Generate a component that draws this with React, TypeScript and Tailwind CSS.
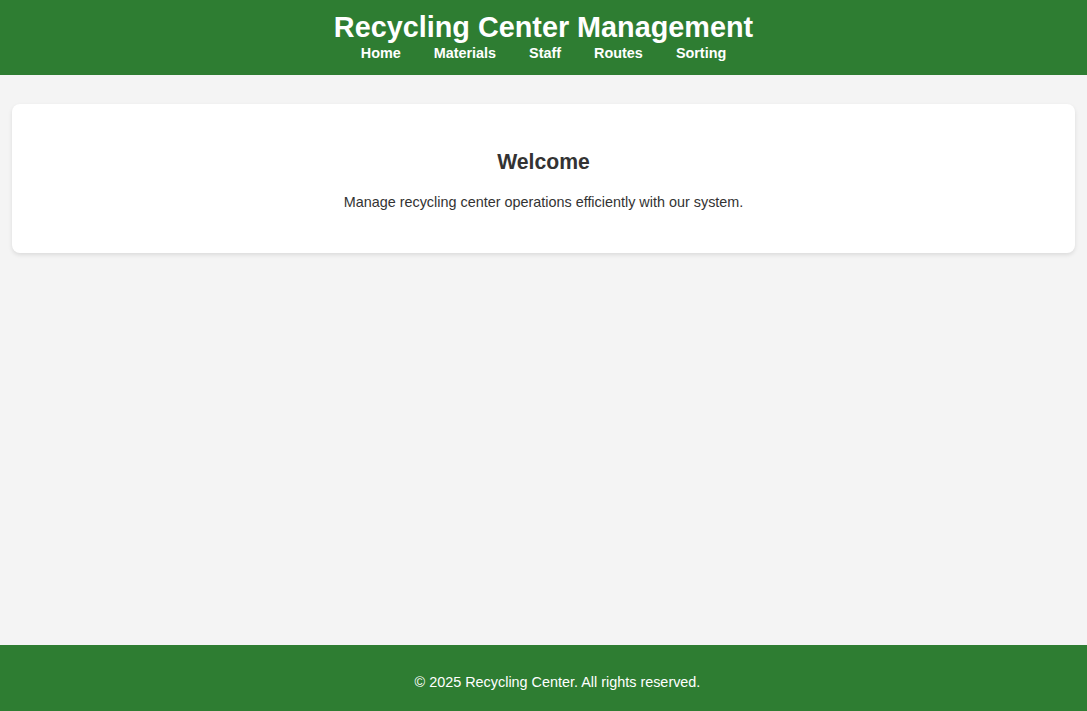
const navLinks = ["Home", "Materials", "Staff", "Routes", "Sorting"];

const App = () => {
    return (
        <div className="min-h-screen flex flex-col bg-[#f4f4f4] text-[#333] font-['Liberation_Sans',Arial,sans-serif]">
            {/**Header */}
            <header className="bg-[#2e7d32] text-white text-center pt-[11px] pb-[14px]">
                <h1 className="font-bold text-[28.8px] leading-[33px]">Recycling Center Management</h1>
                <nav className="flex justify-center gap-[33px] mt-[1px]">
                    {navLinks.map((link) => (
                        <a key={link} href="#" className="text-white font-bold text-[14.4px] leading-[16px] no-underline">
                            {link}
                        </a>
                    ))}
                </nav>
            </header>

            <main className="min-h-[570px] px-3 pt-[29px]">
                <section className="bg-white rounded-lg shadow-[0_2px_4px_rgba(0,0,0,0.1)] text-center pt-[46px] pb-[41px]">
                    <h2 className="font-bold text-[21.2px] leading-[24px]">Welcome</h2>
                    <p className="text-[14.4px] leading-[20px] mt-[18px]">
                        Manage recycling center operations efficiently with our system.
                    </p>
                </section>
            </main>

            {/**Footer - content sits a bit right of centre in the original */}
            <footer className="bg-[#2e7d32] text-white text-center py-[29px] pl-[28px]">
                <p className="text-[14.4px] leading-[17px]">© 2025 Recycling Center. All rights reserved.</p>
            </footer>
        </div>
    );
};

export default App;
